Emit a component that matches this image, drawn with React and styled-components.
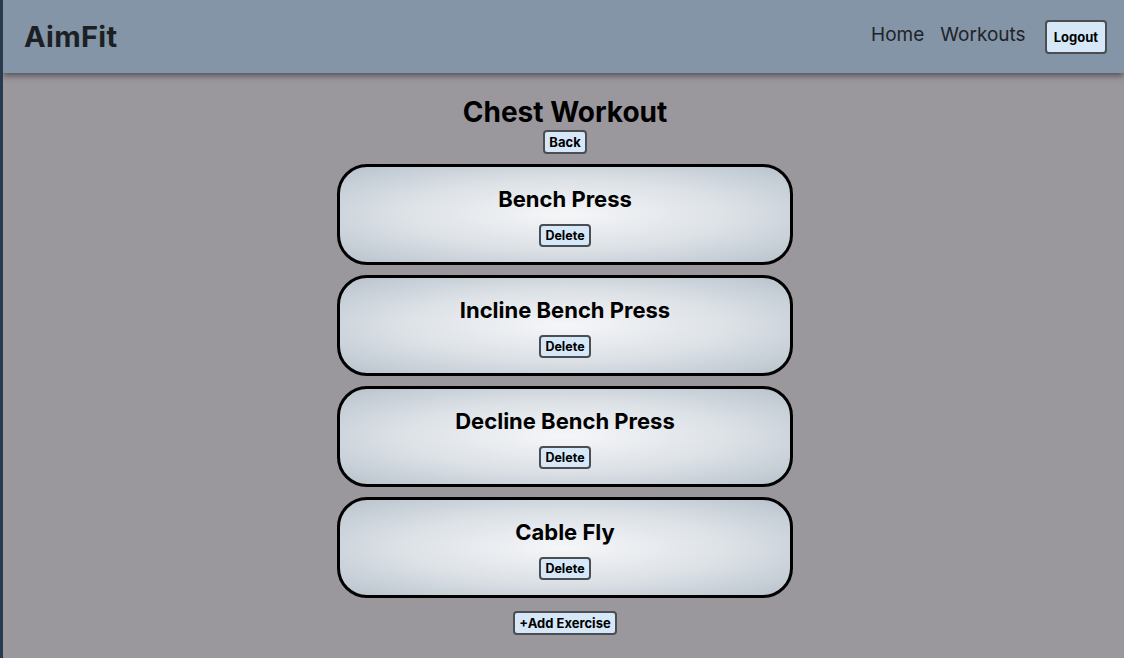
import React from "react";
import styled, { createGlobalStyle } from "styled-components";

const GlobalStyle = createGlobalStyle`
  html, body {
    margin: 0;
    padding: 0;
    height: 100%;
  }
  body {
    font-family: Inter, "Liberation Sans", Arial, sans-serif;
    background: #9a989d;
    border-left: 3px solid #2a3a4e;
    box-sizing: border-box;
  }
`;

const Page = styled.div`
  min-height: 658px;
  background: #9a989d;
`;

const NavBar = styled.header`
  height: 73px;
  background: #8395a6;
  display: flex;
  align-items: center;
  justify-content: space-between;
  padding: 0 17px 0 21px;
  box-shadow: 0 3px 6px rgba(0, 0, 0, 0.45);
  position: relative;
`;

const Logo = styled.div`
  font-size: 29px;
  font-weight: 700;
  color: #1c1f24;
  letter-spacing: 0.3px;
`;

const NavLinks = styled.nav`
  display: flex;
  align-items: center;
  gap: 16px;
`;

const NavLink = styled.a`
  font-size: 19px;
  color: #1f2329;
  text-decoration: none;
  margin-top: -5px;
`;

const Button = styled.button`
  font-family: Inter, "Liberation Sans", Arial, sans-serif;
  font-weight: 700;
  font-size: ${(p) => p.$size || 13}px;
  color: #000;
  background: #d6e8f8;
  border: 2px solid #4a4d52;
  border-radius: 4px;
  padding: ${(p) => p.$pad || "2px 4px"};
  cursor: pointer;
`;

const Main = styled.main`
  display: flex;
  flex-direction: column;
  align-items: center;
  padding: 21px 0 0 3px;
`;

const Title = styled.h1`
  margin: 0;
  font-size: 28px;
  font-weight: 700;
  color: #000;
  line-height: 36px;
`;

const CardList = styled.div`
  display: flex;
  flex-direction: column;
  gap: 10px;
  margin-top: 10px;
  width: 456px;
`;

const Card = styled.div`
  height: 101px;
  box-sizing: border-box;
  border: 3px solid #000;
  border-radius: 30px;
  background: radial-gradient(ellipse at center, #f5f6f8 0%, #dde2e7 50%, #b9c3cd 100%);
  display: flex;
  flex-direction: column;
  align-items: center;
  padding-top: 18px;
`;

const CardTitle = styled.h2`
  margin: 0;
  font-size: 22px;
  font-weight: 700;
  color: #000;
  line-height: 28px;
  margin-bottom: 11px;
`;

const Footer = styled.div`
  margin-top: 13px;
`;

const exercises = ["Bench Press", "Incline Bench Press", "Decline Bench Press", "Cable Fly"];

export default function App() {
  return (
    <Page>
      <GlobalStyle />
      <NavBar>
        <Logo>AimFit</Logo>
        <NavLinks>
          <NavLink href="#">Home</NavLink>
          <NavLink href="#">Workouts</NavLink>
          <Button $pad="7px 7px" $size={13} style={{ marginLeft: 3 }}>
            Logout
          </Button>
        </NavLinks>
      </NavBar>
      <Main>
        <Title>Chest Workout</Title>
        <Button>Back</Button>
        <CardList>
          {exercises.map((name) => (
            <Card key={name}>
              <CardTitle>{name}</CardTitle>
              <Button $size={12.5}>Delete</Button>
            </Card>
          ))}
        </CardList>
        <Footer>
          <Button>+Add Exercise</Button>
        </Footer>
      </Main>
    </Page>
  );
}
